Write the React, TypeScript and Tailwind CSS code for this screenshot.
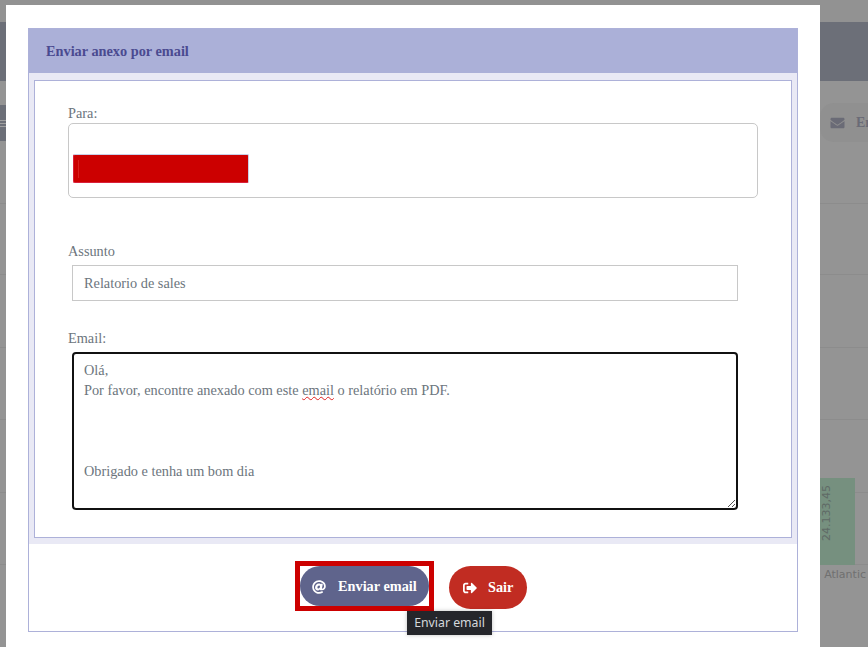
import { FaAt, FaEnvelope, FaSignOutAlt } from "react-icons/fa";

const serif = "font-['Liberation_Serif',serif]";

// Page behind the dimmed overlay
const BackgroundPage = () => (
  <div className="h-[647px] w-[868px] overflow-hidden bg-[#949494]">
    <div className="h-[22px] bg-[#929292]" />
    <div className="h-[59px] bg-[#6c6f78]" />
    <div className="flex h-[123px] items-start justify-between border-b border-[#8c8c8c]">
      <div className="mt-[24px] flex h-[36px] w-[6px] flex-col gap-[2px] bg-[#6c6f78] pt-[15px]">
        <div className="h-px bg-[#a0a0a0]" />
        <div className="h-px bg-[#a0a0a0]" />
        <div className="h-px bg-[#a0a0a0]" />
      </div>
      <div className={`mt-[22px] flex h-[39px] w-[48px] items-center gap-[11px] rounded-l-[14px] bg-[#909090] pl-[10px] text-[14px] font-bold text-[#6a6b76] ${serif}`}>
        <FaEnvelope className="h-[14px] w-[15px] shrink-0" />
        <span>En</span>
      </div>
    </div>
    <div className="h-[71px] border-b border-[#8c8c8c]" />
    <div className="h-[73px] border-b border-[#8c8c8c]" />
    <div className="h-[72px] border-b border-[#8c8c8c]" />
    <div className="h-[73px] border-b border-[#8c8c8c]" />
    <div className="flex h-[72px] justify-end border-b border-[#8c8c8c]">
      <div className="mr-[13px] mt-[-15px] flex h-[87px] w-[35px] items-start justify-start bg-[#76907f]">
        <span className="mt-[7px] w-[14px] rotate-180 whitespace-nowrap font-['DejaVu_Sans',sans-serif] text-[11px] leading-[14px] text-[#5f6a66] [writing-mode:vertical-rl]">24.133,45</span>
      </div>
    </div>
    <div className="flex justify-end pr-[2px] pt-[2px] font-['DejaVu_Sans',sans-serif] text-[11px] text-[#707070]">Atlantic</div>
  </div>
);

export default function App() {
  return (
    <main className="relative h-[647px] w-[868px] overflow-hidden">
      <BackgroundPage />

      {/* modal */}
      <div className={`absolute left-[6px] top-[5px] h-[642px] w-[814px] bg-white px-[22px] pt-[23px] ${serif}`}>
        <div className="h-[604px] border border-[#adb1d9]">
          <div className="flex h-[44px] items-center bg-[#abb0d8] pl-[17px] pt-[2px] text-[14.3px] font-bold text-[#4a4a90]">
            Enviar anexo por email
          </div>

          <div className="bg-[#e9e9f5] px-[5px] pb-[6px] pt-[7px]">
            <div className="h-[458px] border border-[#adb1d9] bg-white pl-[33px] pr-[33px] pt-[23px] text-[14.3px] leading-[18px] text-[#6c757d]">
              <div>Para:</div>
              <div className="mt-[1px] flex h-[75px] items-start rounded-[5px] border border-[#c8c8c8] pl-[4px] pt-[30px]">
                <div className="flex h-[29px] w-[176px] items-center rounded-[2px] border border-[#d9203a] border-r-[#c9cfe8] border-t-[#c9cfe8] bg-[#cc0000] pl-[4px]">
                  <div className="h-[18px] w-px bg-[#d82020]" />
                </div>
              </div>

              <div className="mt-[44px]">Assunto</div>
              <div className="ml-[4px] mt-[5px] flex h-[36px] w-[666px] items-center border border-[#c8c8c8] pl-[11px]">
                Relatorio de sales
              </div>

              <div className="mt-[28px]">Email:</div>
              <div className="relative ml-[4px] mt-[5px] h-[158px] w-[666px] rounded-[4px] border-2 border-[#111111] pl-[10px] pt-[7px] leading-[19.5px]">
                <div>Olá,</div>
                <div>
                  Por favor, encontre anexado com este{" "}
                  <span className="underline decoration-[#e02020] decoration-wavy decoration-1 underline-offset-[1px]">email</span> o relatório em PDF.
                </div>
                <div className="mt-[62px]">Obrigado e tenha um bom dia</div>
                <svg className="absolute bottom-0 right-0 h-[9px] w-[9px]" viewBox="0 0 9 9" stroke="#555555" strokeWidth="1">
                  <path d="M1 8 8 1M5 8 8 5" />
                </svg>
              </div>
            </div>
          </div>

          <div className="flex justify-center gap-[15px] pr-[4px] pt-[17px]">
            <div className="flex h-[50px] w-[139px] items-center justify-center border-[5px] border-[#cc0000]">
              <button className="flex h-[40px] w-[129px] shrink-0 items-center rounded-[20px] bg-[#5f648c] pl-[12px] pt-[2px] text-[14.3px] font-bold text-white">
                <FaAt className="mr-[12px] h-[14px] w-[14px]" />
                Enviar email
              </button>
            </div>
            <button className="mt-[5px] flex h-[43px] w-[78px] items-center rounded-[22px] bg-[#c12c22] pl-[14px] text-[14.3px] font-bold text-white">
              <FaSignOutAlt className="mr-[11px] h-[14px] w-[14px]" />
              Sair
            </button>
          </div>
        </div>
      </div>

      {/* tooltip */}
      <div className="absolute left-[407px] top-[611px] flex h-[24px] w-[85px] items-center justify-center bg-[#25262b] font-['Noto_Sans',sans-serif] text-[12.3px] text-[#d5d8dc] shadow-[0_0_4px_rgba(0,0,0,0.25)]">
        Enviar email
      </div>
    </main>
  );
}
